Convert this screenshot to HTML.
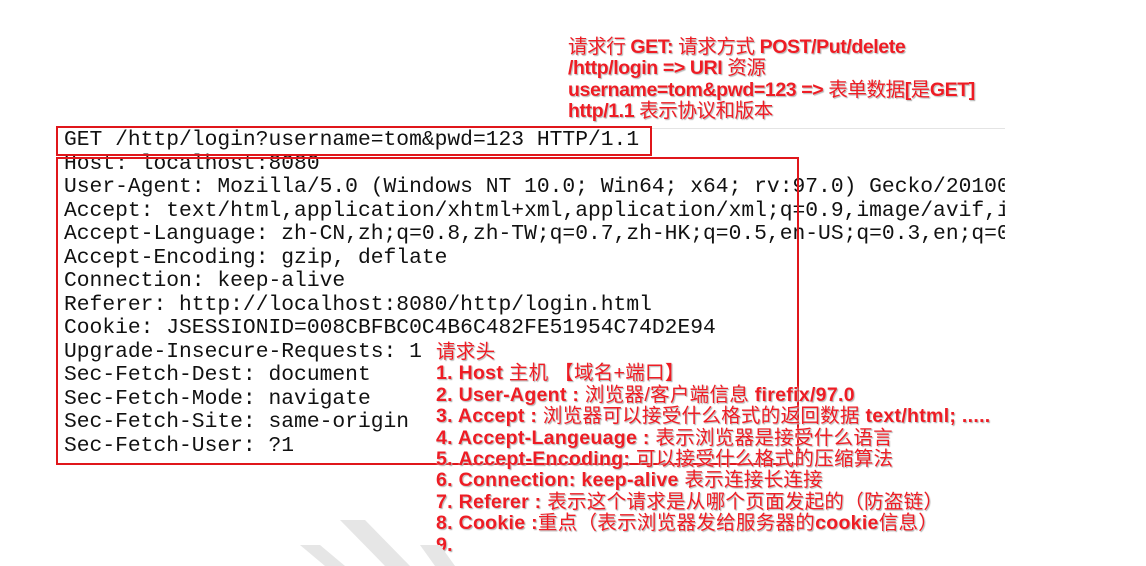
<!DOCTYPE html>
<html><head><meta charset="utf-8"><style>
body{margin:0;width:1146px;height:566px;background:#fff;position:relative;overflow:hidden}
.code{position:absolute;left:64px;top:129px;width:941px;overflow:hidden;white-space:pre;font-family:"Liberation Mono",monospace;font-size:21.3px;line-height:23.5px;color:#111}
.box{position:absolute;border:2px solid #e0161b}
.ann{position:absolute;font-family:"Liberation Sans","Noto Sans CJK SC",sans-serif;font-weight:bold;color:#ee1c24;font-size:19.5px;letter-spacing:0;white-space:pre;text-shadow:0 0 2px #fff,1px 1px 1px #999}
.ann b{font-weight:normal}
</style></head><body>
<div style="position:absolute;left:651px;top:128px;width:354px;height:1px;background:#e4e4e4"></div>
<div class="code">GET /http/login?username=tom&amp;pwd=123 HTTP/1.1
Host: localhost:8080
User-Agent: Mozilla/5.0 (Windows NT 10.0; Win64; x64; rv:97.0) Gecko/20100101
Accept: text/html,application/xhtml+xml,application/xml;q=0.9,image/avif,image
Accept-Language: zh-CN,zh;q=0.8,zh-TW;q=0.7,zh-HK;q=0.5,en-US;q=0.3,en;q=0.2
Accept-Encoding: gzip, deflate
Connection: keep-alive
Referer: http://localhost:8080/http/login.html
Cookie: JSESSIONID=008CBFBC0C4B6C482FE51954C74D2E94
Upgrade-Insecure-Requests: 1
Sec-Fetch-Dest: document
Sec-Fetch-Mode: navigate
Sec-Fetch-Site: same-origin
Sec-Fetch-User: ?1</div>
<div class="box" style="left:56px;top:126px;width:592px;height:26px"></div>
<div class="box" style="left:56px;top:157px;width:739px;height:304px"></div>
<div class="ann" style="left:568px;top:37px;line-height:21.3px;letter-spacing:-0.4px"><b>请求行</b> GET: <b>请求方式</b> POST/Put/delete
/http/login =&gt; URI <b>资源</b>
username=tom&amp;pwd=123 =&gt; <b>表单数据</b>[<b>是</b>GET]
http/1.1 <b>表示协议和版本</b></div>
<div class="ann" style="left:436px;top:342px;line-height:21.4px;letter-spacing:0.3px"><b>请求头</b>
1. Host <b>主机 【域名+端口】</b>
2. User-Agent : <b>浏览器/客户端信息</b> firefix/97.0
3. Accept : <b>浏览器可以接受什么格式的返回数据</b> text/html; .....
4. Accept-Langeuage : <b>表示浏览器是接受什么语言</b>
5. Accept-Encoding: <b>可以接受什么格式的压缩算法</b>
6. Connection: keep-alive <b>表示连接长连接</b>
7. Referer : <b>表示这个请求是从哪个页面发起的（防盗链）</b>
8. Cookie :<b>重点（表示浏览器发给服务器的</b>cookie<b>信息）</b>
9.</div>
<svg style="position:absolute;left:0;top:0" width="1146" height="566"><g fill="#e6e6e6"><polygon points="300,545 320,545 345,566 325,566"/><polygon points="340,520 365,520 410,566 385,566"/><polygon points="420,545 440,545 455,566 435,566"/></g></svg>
</body></html>
